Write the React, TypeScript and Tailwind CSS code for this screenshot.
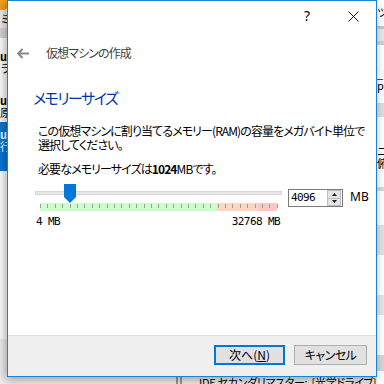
import React from "react";

const jp = { fontFamily: '"Noto Sans CJK JP", "Noto Sans", sans-serif' };
const mono = { fontFamily: '"DejaVu Sans Mono", "Liberation Mono", monospace' };

function Ticks() {
  const ticks = [];
  for (let i = 0; i <= 32; i++) {
    ticks.push(
      <div
        key={i}
        className="absolute top-[1px] w-[1px] h-[4px] bg-[#9a9a9a]"
        style={{ left: Math.round(i * 7.4) }}
      />
    );
  }
  return <>{ticks}</>;
}

export default function App() {
  return (
    <div className="relative w-[384px] h-[384px] overflow-hidden bg-[#f0f0f0]" style={jp}>
      {/* background window (left strip) */}
      <div className="absolute left-0 top-0 w-[7px] h-[384px] bg-white overflow-hidden">
        <div className="h-[10px] w-[7px] bg-[#f2a11d] rounded-br-[3px]" />
        <div className="h-[18px] bg-[#f0f0f0] text-[12px] leading-[18px] text-black">ミ</div>
        <div className="h-[10px] bg-[#d9d9d9]" />
        <div className="h-[12px]" />
        <div className="text-[11px] leading-[12px] text-black">
          <b>u</b>
          <br />ラ
        </div>
        <div className="h-[20px]" />
        <div className="text-[11px] leading-[12px] text-black">
          <b>u</b>
          <br />原
        </div>
        <div className="h-[4px]" />
        <div className="h-[49px] bg-[#0a78d7] text-white text-[11px] leading-[12px] pt-[6px]">
          <b>u</b>
          <br />行
        </div>
        <div className="h-[168px]" />
        <div className="h-[49px] bg-[#f0f0f0]" />
      </div>
      {/* right strip */}
      <div className="absolute left-[377px] top-0 w-[7px] h-[384px] bg-white text-[11px] leading-[12px] text-black overflow-hidden">
        <div className="h-[26px] pt-[6px]">ツ</div>
        <div className="h-[3px] bg-[#c8c8c8]" />
        <div className="h-[12px] bg-[#e8e8e8]" />
        <div className="h-[4px] bg-[#d0d0d0]" />
        <div className="h-[22px]" />
        <div>
          _b
          <br />
          pi
        </div>
        <div className="h-[12px]" />
        <div className="h-[14px] bg-[#dedede]" />
        <div className="h-[28px]" />
        <div>
          ニ
          <br />俯
        </div>
        <div className="h-[18px]" />
        <div className="h-[4px] bg-[#d8d8d8]" />
        <div className="h-[34px]" />
        <div className="h-[30px] bg-[#e2e2e2]" />
        <div className="h-[40px]" />
        <div className="h-[20px] bg-[#e6e6e6]" />
        <div className="h-[40px]" />
        <div className="h-[16px] bg-[#d6d6d6]" />
      </div>
      {/* bottom strip */}
      <div className="absolute left-[176px] top-[377px] w-[8px] h-[7px] flex gap-[2px]">
        <div className="w-[2px] h-full bg-[#9a9a9a]" />
        <div className="w-[2px] h-full bg-[#9a9a9a]" />
      </div>
      <div className="absolute left-[199px] top-[377px] h-[7px] overflow-hidden">
        <div className="-mt-[2px] text-[11px] leading-[14px] text-black whitespace-nowrap [font-feature-settings:'palt'] tracking-[-0.3px]">
          IDE セカンダリマスター:&nbsp;&nbsp;[光学ドライブ]
        </div>
      </div>

      {/* dialog */}
      <div className="absolute left-[7px] top-0 w-[370px] h-[377px] border border-[#1883d7] bg-white flex flex-col shadow-[-2px_3px_10px_rgba(0,0,0,0.35)]">
        {/* title bar */}
        <div className="h-[30px] flex justify-end items-center text-black">
          <div className="w-[46px] h-[30px] flex items-center justify-center text-[14px] leading-none" style={{ fontFamily: '"Noto Sans", sans-serif' }}>
            ?
          </div>
          <div className="w-[46px] h-[30px] flex items-center justify-center">
            <svg width="11" height="11" viewBox="0 0 11 11">
              <path d="M0.5 0.5 L10.5 10.5 M10.5 0.5 L0.5 10.5" stroke="#111" strokeWidth="1" />
            </svg>
          </div>
        </div>
        {/* header row */}
        <div className="mt-[12px] h-[20px] flex items-center pl-[9px]">
          <svg width="12" height="11" viewBox="0 0 12 11">
            <path d="M5.5 1 L1.2 5.5 L5.5 10 M1.2 5.5 H12" stroke="#8a8a8a" strokeWidth="2" fill="none" />
          </svg>
          <span className="ml-[17px] text-[12px] leading-[20px] text-[#404040] [font-feature-settings:'palt'] tracking-[-0.9px]">
            仮想マシンの作成
          </span>
        </div>
        {/* body */}
        <div className="flex-1">
          <div className="mt-[25px] pl-[25px] h-[20px] text-[15px] leading-[20px] text-[#0033aa] [font-feature-settings:'palt'] tracking-[-1.5px]">
            メモリーサイズ
          </div>
          <div className="mt-[16px] pl-[30px] text-[12px] leading-[14px] text-black [font-feature-settings:'palt'] tracking-[-0.9px] whitespace-nowrap">
            <div>この仮想マシンに割り当てるメモリー(RAM)の容量をメガバイト単位で</div>
            <div>選択してください。</div>
            <div className="mt-[10px]">
              必要なメモリーサイズは<span className="font-bold">1024</span>MBです。
            </div>
          </div>
          {/* slider row */}
          <div className="mt-[8px] pl-[27px] flex items-start">
            <div className="w-[247px]">
              <div className="relative h-[19px]">
                <div className="absolute left-0 right-0 top-[7px] h-[4px] bg-[#e7e7e7] border border-[#d6d6d6]" />
                <svg className="absolute left-[29px] top-0" width="12" height="19" viewBox="0 0 12 19">
                  <path d="M0 0 H12 V13 L6 19 L0 13 Z" fill="#0078d7" />
                </svg>
              </div>
              <div className="relative ml-[5px] w-[237px] h-[8px] flex">
                <div className="w-[177px] h-full bg-[#ccffcc]" />
                <div className="w-[41px] h-full bg-[#ffd6c2]" />
                <div className="flex-1 h-full bg-[#ffc6c6]" />
                <Ticks />
              </div>
              <div className="mt-[4px] flex justify-between text-[11px] leading-[14px] text-black tracking-[-0.6px] pl-[1px] pr-[2px]" style={mono}>
                <span>4 MB</span>
                <span>32768 MB</span>
              </div>
            </div>
            <div className="ml-[6px] mt-[5px] w-[55px] h-[18px] border border-[#7a7a7a] flex items-center bg-white">
              <span className="pl-[2px] flex-1 text-[11px] leading-[16px] text-black tracking-[-0.6px]" style={mono}>
                4096
              </span>
              <div className="w-[14px] h-[16px] flex flex-col mr-[1px]">
                <div className="flex-1 bg-[#e5e5e5] border border-[#bdbdbd] flex items-center justify-center">
                  <svg width="5" height="3" viewBox="0 0 5 3"><path d="M2.5 0 L5 3 H0 Z" fill="#222" /></svg>
                </div>
                <div className="flex-1 bg-[#e5e5e5] border border-t-0 border-[#bdbdbd] flex items-center justify-center">
                  <svg width="5" height="3" viewBox="0 0 5 3"><path d="M0 0 H5 L2.5 3 Z" fill="#222" /></svg>
                </div>
              </div>
            </div>
            <span className="ml-[7px] mt-[6px] text-[12px] leading-[14px] text-black" style={{ fontFamily: '"Noto Sans", sans-serif' }}>
              MB
            </span>
          </div>
        </div>
        {/* footer */}
        <div className="h-[41px] bg-[#f0f0f0] border-t border-[#dfdfdf] flex justify-end items-start pt-[9px] pr-[9px] gap-[9px]">
          <button className="w-[71px] h-[20px] bg-[#e1e1e1] border-2 border-[#0078d7] text-[12px] leading-[16px] text-black [font-feature-settings:'palt']">
            次へ(<span className="underline">N</span>)
          </button>
          <button className="w-[73px] h-[20px] bg-[#e1e1e1] border border-[#adadad] text-[12px] leading-[18px] text-black [font-feature-settings:'palt'] tracking-[-0.5px]">
            キャンセル
          </button>
        </div>
      </div>
    </div>
  );
}
